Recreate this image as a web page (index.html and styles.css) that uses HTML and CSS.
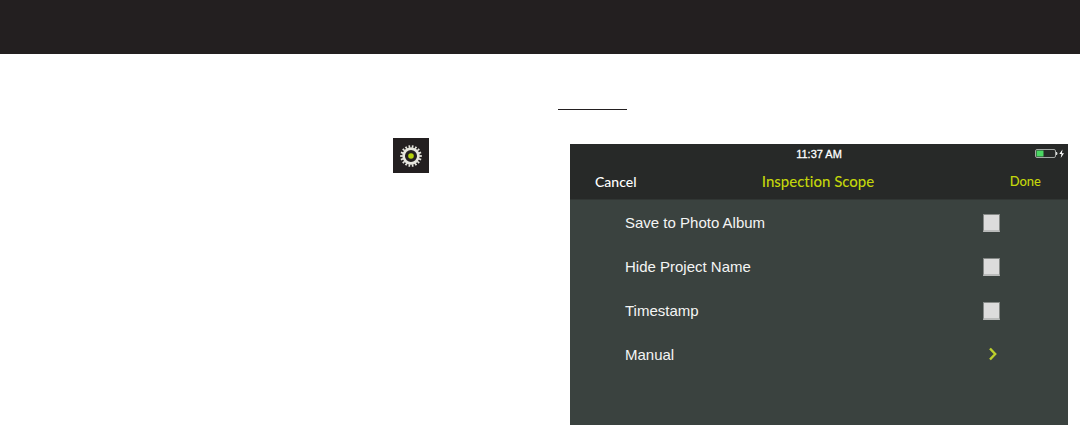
FILE: index.html
```html
<!DOCTYPE html>
<html lang="en">
<head>
  <meta charset="UTF-8" />
  <meta name="viewport" content="width=device-width, initial-scale=1.0"/>
  <title>Inspection Scope</title>
  <link rel="stylesheet" href="styles.css">
</head>
<body>
  <div class="top-bar"></div>

  <main class="columns">
    <div class="left">
      <button class="gear-btn" type="button" aria-label="Settings">
        <svg width="24" height="24" viewBox="0 0 24 24" fill="none">
          <circle cx="12" cy="12" r="9.5" pathLength="36" stroke="#e6e6de" stroke-width="2.6" stroke-dasharray="1 1" stroke-dashoffset="0.5" />
          <circle cx="12" cy="12" r="7.4" stroke="#e6e6de" stroke-width="2.7" />
          <circle cx="12" cy="12" r="2.8" fill="#b5d20c" />
        </svg>
      </button>
    </div>

    <div class="right">
      <div class="rule"></div>

      <section class="phone">
        <header class="phone-header">
          <div class="status">
            <span class="time">11:37 AM</span>
            <svg class="battery" width="30" height="10" viewBox="0 0 30 10">
              <rect x="0.5" y="0.5" width="20" height="8" rx="1.5" fill="none" stroke="#a4a8a6" />
              <rect x="1.5" y="1.5" width="7" height="6" fill="#4bd763" />
              <path d="M21.5 3v3q1.3-1.5 0-3z" fill="#fff" stroke="#fff" stroke-width="0.6" />
              <path d="M27.5 0.5 24.3 5h2.2L25.7 9 29 4.3h-2.1z" fill="#fff" />
            </svg>
          </div>
          <nav class="nav">
            <button class="nav-btn" type="button">Cancel</button>
            <h1>Inspection Scope</h1>
            <button class="nav-btn done" type="button">Done</button>
          </nav>
        </header>

        <div class="options">
          <label class="row">Save to Photo Album <input type="checkbox" class="check"></label>
          <label class="row">Hide Project Name <input type="checkbox" class="check"></label>
          <label class="row">Timestamp <input type="checkbox" class="check"></label>
          <a class="row" href="#manual">Manual
            <svg class="chevron" width="12" height="16" viewBox="0 0 12 16" fill="none" stroke="#bdd02c" stroke-width="2.4">
              <path d="M3 2.5 8.2 8 3 13.5" />
            </svg>
          </a>
        </div>
      </section>
    </div>
  </main>
</body>
</html>
```

FILE: styles.css
```css
body {
  margin: 0;
  min-height: 100vh;
  display: flex;
  flex-direction: column;
  background: #fff;
  font-family: "Liberation Sans", Arial, sans-serif;
}
.top-bar {
  height: 54px;
  background: #231f20;
}
.columns {
  flex: 1;
  display: grid;
  grid-template-columns: 31fr 29fr;
}
.left {
  padding: 84px 129px 0 0;
  text-align: right;
}
.gear-btn {
  display: inline-flex;
  align-items: center;
  justify-content: center;
  width: 36px;
  height: 35px;
  padding: 0;
  border: none;
  background: #231f20;
  cursor: pointer;
}
.right {
  display: flex;
  flex-direction: column;
  padding: 55px 12px 0 0;
}
.rule {
  width: 69px;
  height: 1px;
  background: #231f20;
}
.phone {
  flex: 1;
  margin: 34px 0 0 12px;
  background: #3a423f;
}
.phone-header {
  background: #272928;
  border-bottom: 1px solid #313634;
}
.status {
  display: grid;
  grid-template-columns: 1fr auto 1fr;
  align-items: center;
  height: 19px;
  padding: 0 3px;
  color: #fff;
}
.time {
  grid-column: 2;
  font-size: 11px;
  -webkit-text-stroke: 0.3px #fff;
}
.battery {
  justify-self: end;
}
.nav {
  display: grid;
  grid-template-columns: 1fr auto 1fr;
  align-items: center;
  height: 36px;
  padding: 0 27px 0 25px;
  font-family: Lato, sans-serif;
  font-variant-ligatures: none;
}
.nav h1 {
  margin: 0;
  font-size: 15px;
  font-weight: 500;
  color: #c3d60b;
}
.nav-btn {
  justify-self: start;
  padding: 0;
  border: none;
  background: none;
  font-family: inherit;
  font-size: 14px;
  font-weight: 500;
  color: #fff;
  cursor: pointer;
}
.done {
  justify-self: end;
  font-size: 13px;
  color: #c3d60b;
}
.row {
  display: flex;
  align-items: flex-start;
  justify-content: space-between;
  box-sizing: border-box;
  height: 44px;
  padding: 14px 68px 0 55px;
  font-size: 15px;
  line-height: 17px;
  color: #f4f5f4;
  text-decoration: none;
}
.check {
  appearance: none;
  width: 17px;
  height: 18px;
  margin: 0;
  background: #dcdcdc;
  border: 1px solid #858987;
  border-bottom: 2px solid #b9bbba;
}
.chevron {
  margin-right: 1px;
}
```
